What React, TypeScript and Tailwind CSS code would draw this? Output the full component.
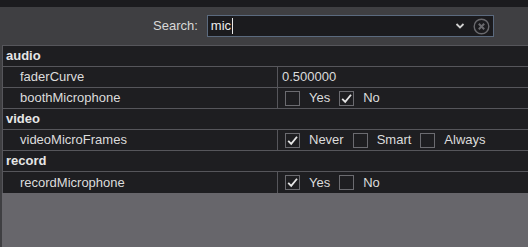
import React from "react";

function Check({ checked }: { checked?: boolean }) {
  return (
    <span className="w-[15px] h-[15px] border border-[#6b6b70] bg-[#1e1e21] flex items-center justify-center shrink-0">
      {checked && (
        <svg width="13" height="13" viewBox="0 0 13 13">
          <path d="M2.2 6.8 L5.2 9.8 L11 2.8" fill="none" stroke="#e6e6e6" strokeWidth="1.8" />
        </svg>
      )}
    </span>
  );
}

function Options({ items }: { items: [string, boolean][] }) {
  return (
    <div className="flex items-center pl-[7px] gap-[9px]">
      {items.map(([label, c]) => (
        <React.Fragment key={label}>
          <Check checked={c} />
          <span>{label}</span>
        </React.Fragment>
      ))}
    </div>
  );
}

function Header({ name }: { name: string }) {
  return (
    <div className="h-[21px] border-b border-[#56565b] flex items-center pl-[3px] font-bold text-[#e6e6e6]">
      {name}
    </div>
  );
}

function Row({ name, children, last }: { name: string; children: React.ReactNode; last?: boolean }) {
  return (
    <div className={"h-[21px] flex " + (last ? "" : "border-b border-[#56565b]")}>
      <div className="w-[275px] border-r border-[#56565b] flex items-center pl-[17px]">{name}</div>
      <div className="flex-1 flex items-center">{children}</div>
    </div>
  );
}

export default function App() {
  return (
    <div className="w-[528px] h-[247px] bg-[#3f3f42] flex flex-col font-['Liberation_Sans',Arial,sans-serif] text-[13px] text-[#dcdcdc] overflow-hidden">
      <div className="h-[7px] bg-[#1b1b1e] shrink-0" />
      <div className="h-[38px] shrink-0 flex items-center pl-[153px]">
        <span className="text-[#d8d8d8]">Search:</span>
        <div className="ml-[9px] w-[287px] h-[22px] border border-[#5b6a7e] bg-[#1b1b1e] flex items-center pl-[3px] pr-[3px]">
          <span className="text-[#ececec]">mic</span>
          <span className="w-[1px] h-[16px] bg-[#e8e8e8] ml-[1px]" />
          <div className="flex-1" />
          <svg width="10" height="8" viewBox="0 0 10 8" className="mr-[8px]">
            <path d="M1.5 2 L5 5.5 L8.5 2" fill="none" stroke="#d0d0d0" strokeWidth="1.8" />
          </svg>
          <svg width="17" height="17" viewBox="0 0 17 17">
            <circle cx="8.5" cy="8.5" r="7.3" fill="none" stroke="#6a6a6e" strokeWidth="1.4" />
            <path d="M5.8 5.8 L11.2 11.2 M11.2 5.8 L5.8 11.2" stroke="#6a6a6e" strokeWidth="2" />
          </svg>
        </div>
      </div>
      <div className="flex-1 bg-[#67666b] border-l-2 border-[#3f3f42]">
        <div className="bg-[#1e1e21] border-t border-l border-[#56565b]">
          <Header name="audio" />
          <Row name="faderCurve">
            <span className="pl-[4px]">0.500000</span>
          </Row>
          <Row name="boothMicrophone">
            <Options items={[["Yes", false], ["No", true]]} />
          </Row>
          <Header name="video" />
          <Row name="videoMicroFrames">
            <Options items={[["Never", true], ["Smart", false], ["Always", false]]} />
          </Row>
          <Header name="record" />
          <Row name="recordMicrophone" last>
            <Options items={[["Yes", true], ["No", false]]} />
          </Row>
        </div>
      </div>
    </div>
  );
}
